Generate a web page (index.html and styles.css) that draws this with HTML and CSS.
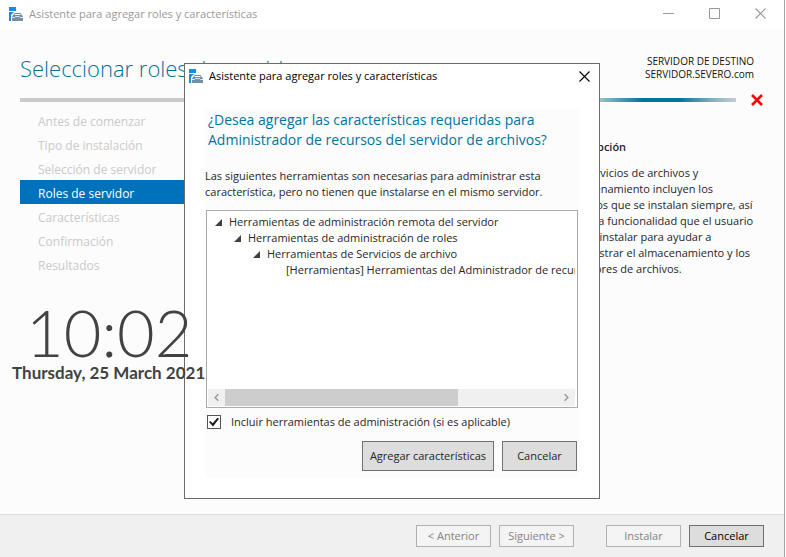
FILE: index.html
```html
<!DOCTYPE html>
<html lang="es">
<head>
<meta charset="utf-8">
<title>Asistente para agregar roles y características</title>
<link rel="stylesheet" href="styles.css">
</head>
<body>
<svg class="defs" aria-hidden="true">
  <symbol id="wizard" viewBox="0 0 14 14">
    <path fill="#1f8ad8" d="M0 0h7v4H0zM0 5h5L2 8v6H0z"/>
    <path fill="none" stroke="#7190a8" d="M5 8.500V7l1-.5h5l1 .5v1.500"/>
    <path fill="#7190a8" d="M4 8h9l1 2v4H3v-4z"/>
    <path fill="none" stroke="#fff" stroke-width=".8" d="M3 10.500h2.500l1-.9h4l1 .9H14"/>
  </symbol>
  <symbol id="close" viewBox="0 0 11 11">
    <path fill="none" stroke="currentColor" stroke-width="1.1" d="M.5.5l10 10M10.500.5l-10 10"/>
  </symbol>
</svg>

<div class="window">
  <header class="titlebar">
    <svg class="app-icon"><use href="#wizard"/></svg>
    <span class="caption">Asistente para agregar roles y características</span>
    <div class="controls">
      <button type="button" aria-label="Minimizar"><svg viewBox="0 0 11 11"><path stroke="currentColor" d="M0 5.500h11"/></svg></button>
      <button type="button" aria-label="Maximizar"><svg viewBox="0 0 11 11"><path fill="none" stroke="currentColor" d="M.5.5h10v10H.5z"/></svg></button>
      <button type="button" aria-label="Cerrar"><svg><use href="#close"/></svg></button>
    </div>
  </header>

  <div class="heading">
    <h1>Seleccionar roles de servidor</h1>
    <p>SERVIDOR DE DESTINO<br>SERVIDOR.SEVERO.com</p>
  </div>
  <div class="progress">
    <div class="track"></div>
    <svg class="error" viewBox="0 0 12 12"><path fill="none" stroke="#f80808" stroke-width="2.600" d="M1 1l10 10M11 1L1 11"/></svg>
  </div>

  <main class="body">
    <nav class="steps">
      <a>Antes de comenzar</a>
      <a>Tipo de instalación</a>
      <a>Selección de servidor</a>
      <a class="current" href="#roles" aria-current="step">Roles de servidor</a>
      <a>Características</a>
      <a>Confirmación</a>
      <a>Resultados</a>
    </nav>
    <section class="description">
      <h2>Descripción</h2>
      <p>Los servicios de archivos y<br>almacenamiento incluyen los<br>servicios que se instalan siempre, así<br>como la funcionalidad que el usuario<br>puede instalar para ayudar a<br>administrar el almacenamiento y los<br>servidores de archivos.</p>
    </section>
  </main>

  <footer class="actions">
    <button type="button" disabled>&lt; Anterior</button>
    <button type="button" disabled>Siguiente &gt;</button>
    <button type="button" class="group" disabled>Instalar</button>
    <button type="button">Cancelar</button>
  </footer>

  <div class="dialog" role="dialog" aria-labelledby="dialog-title">
    <header class="dialog-title">
      <svg class="app-icon"><use href="#wizard"/></svg>
      <span id="dialog-title" class="caption">Asistente para agregar roles y características</span>
      <button type="button" class="dialog-close" aria-label="Cerrar"><svg><use href="#close"/></svg></button>
    </header>
    <div class="panel">
      <h2>¿Desea agregar las características requeridas para<br>Administrador de recursos del servidor de archivos?</h2>
      <p>Las siguientes herramientas son necesarias para administrar esta<br>característica, pero no tienen que instalarse en el mismo servidor.</p>
      <div class="tree-box">
        <ul class="tree">
          <li><span class="node">Herramientas de administración remota del servidor</span>
            <ul>
              <li><span class="node">Herramientas de administración de roles</span>
                <ul>
                  <li><span class="node">Herramientas de Servicios de archivo</span>
                    <ul>
                      <li>[Herramientas] Herramientas del Administrador de recursos del servidor de archivos</li>
                    </ul>
                  </li>
                </ul>
              </li>
            </ul>
          </li>
        </ul>
        <div class="scrollbar">
          <svg viewBox="0 0 18 17"><path d="M11 5L7.500 8.500L11 12"/></svg>
          <div class="rail"><div class="thumb"></div></div>
          <svg viewBox="0 0 18 17"><path d="M7 5l3.500 3.500L7 12"/></svg>
        </div>
      </div>
      <label class="include"><input type="checkbox" checked><span>Incluir herramientas de administración (si es aplicable)</span></label>
      <div class="dialog-actions">
        <button type="button" class="wide">Agregar características</button>
        <button type="button">Cancelar</button>
      </div>
    </div>
  </div>

  <div class="clock">
    <time class="time">10:02</time>
    <time class="date">Thursday, 25 March 2021</time>
  </div>
</div>
</body>
</html>
```

FILE: styles.css
```css
* { box-sizing: border-box; }
body, h1, h2, p, ul { margin: 0; padding: 0; }
body {
  background: #fff;
  color: #262626;
  font: 11px/16px "Open Sans", "Noto Sans", sans-serif;
}
button { font: inherit; color: inherit; padding: 0; }
svg { display: block; }
.defs { position: absolute; width: 0; height: 0; }

.window {
  position: relative;
  display: flex;
  flex-direction: column;
  min-height: 100vh;
  margin-right: 1px;
  border-right: 1px solid #a3a3a3;
  background: #fcfcfc;
  overflow: hidden;
}

.titlebar {
  display: flex;
  align-items: center;
  height: 29px;
  padding: 0 9px 2px;
  background: #fff;
  color: #999;
}
.app-icon { width: 14px; height: 14px; margin-right: 6px; }
.caption { flex: 1; font-size: 11px; }
.controls { display: flex; gap: 16px; }
.controls button, .dialog-close {
  display: grid;
  place-items: center;
  width: 30px;
  height: 22px;
  border: 0;
  background: none;
}
.controls svg, .dialog-close svg { width: 11px; height: 11px; }

.heading {
  display: flex;
  justify-content: space-between;
  align-items: center;
  height: 69px;
  padding: 8px 30px 0 20px;
}
.heading h1 {
  color: #00739b;
  font-size: 22px;
  font-weight: 300;
  line-height: 32px;
}
.heading p {
  color: #111;
  font-size: 10px;
  line-height: 13px;
  text-align: right;
}

.progress {
  display: flex;
  align-items: center;
  gap: 15px;
  height: 4px;
  padding: 0 21px 0 20px;
}
.track {
  flex: 1;
  height: 4px;
  background: linear-gradient(90deg, #cacaca 70%, #9cbfcb 81%, #00739b 87%, #00739b 92%, #8db2bf 97%, #c2ced2);
}
.error { width: 12px; height: 12px; overflow: visible; }

.body {
  flex: 1;
  display: flex;
  justify-content: space-between;
  padding: 6px 20px 0;
}
.steps { width: 180px; font-size: 12px; }
.steps a {
  display: block;
  height: 24px;
  padding: 0 18px;
  color: #cacaca;
  line-height: 27px;
  text-decoration: none;
}
.steps .current { background: #0072bc; color: #fff; }
.description {
  width: 200px;
  padding-top: 31px;
  white-space: nowrap;
}
.description h2 {
  margin-bottom: 10px;
  font-size: 11px;
  font-weight: 600;
}

.actions {
  display: flex;
  justify-content: flex-end;
  gap: 8px;
  height: 43px;
  padding: 10px 20px;
  border-top: 1px solid #dcdcdc;
  background: #f0f0f0;
}
.actions button, .dialog-actions button {
  width: 75px;
  border: 1px solid #707070;
  background: #ddd;
}
.actions button { height: 22px; color: #000; }
.actions button:disabled {
  border-color: #adb2b5;
  background: #f4f4f4;
  color: #838383;
}
.actions .group { margin-left: 24px; }

.dialog {
  position: absolute;
  top: 63px;
  right: 0;
  left: 0;
  width: 416px;
  margin: 0 auto;
  padding: 0 20px 20px;
  border: 1px solid #6b6b6b;
  background: #fff;
}
.dialog-title {
  display: flex;
  align-items: center;
  height: 24px;
  margin: 0 -16px 21px;
  color: #000;
}
.dialog-close { margin-right: -4px; }
.panel {
  padding: 1px 2px 7px 0;
  background: #fcfcfc;
}
.panel h2 {
  padding-left: 3px;
  color: #00739b;
  font-size: 14px;
  font-weight: 400;
  line-height: 20px;
  white-space: nowrap;
}
.panel p { margin: 18px 0 10px; white-space: nowrap; }
.tree-box {
  display: flex;
  flex-direction: column;
  justify-content: space-between;
  height: 198px;
  margin-left: 1px;
  margin-right: -1px;
  padding: 3px 2px 1px 1px;
  border: 1px solid #ababab;
  background: #fff;
}
.tree, .tree ul { list-style: none; white-space: nowrap; }
.tree { padding-left: 21px; overflow: hidden; }
.tree ul { padding-left: 19px; }
.node::before {
  content: "";
  display: inline-block;
  width: 7px;
  height: 7px;
  margin-left: -14px;
  margin-right: 7px;
  background: #404040;
  clip-path: polygon(100% 0, 100% 100%, 0 100%);
}
.scrollbar { display: flex; height: 17px; background: #f0f0f0; }
.scrollbar svg {
  width: 17px;
  height: 17px;
  fill: none;
  stroke: #999;
  stroke-width: 1.5;
}
.rail { flex: 1; }
.thumb { width: 70%; height: 17px; background: #cdcdcd; }

.include {
  display: flex;
  align-items: center;
  gap: 10px;
  height: 16px;
  margin: 6px 0 11px 2px;
}
.include input {
  appearance: none;
  display: grid;
  place-items: center;
  width: 14px;
  height: 14px;
  margin: 0;
  border: 1px solid #555;
  background: #fff;
}
.include input::before {
  content: "";
  width: 10px;
  height: 9px;
  background: #1c1c1c;
  clip-path: polygon(0 50%, 12% 38%, 38% 65%, 85% 0, 100% 14%, 40% 100%);
}
.dialog-actions {
  display: flex;
  justify-content: flex-end;
  gap: 8px;
}
.dialog-actions button { height: 30px; }
.dialog-actions .wide { width: 132px; }

.clock {
  position: absolute;
  top: 300px;
  left: 12px;
  color: #424242;
  font-family: Lato, sans-serif;
  white-space: nowrap;
}
.clock time { display: block; }
.time {
  padding-left: 14px;
  font-size: 65px;
  font-weight: 300;
  line-height: 64px;
}
.date { font-size: 17px; font-weight: 700; line-height: 18px; }
```
